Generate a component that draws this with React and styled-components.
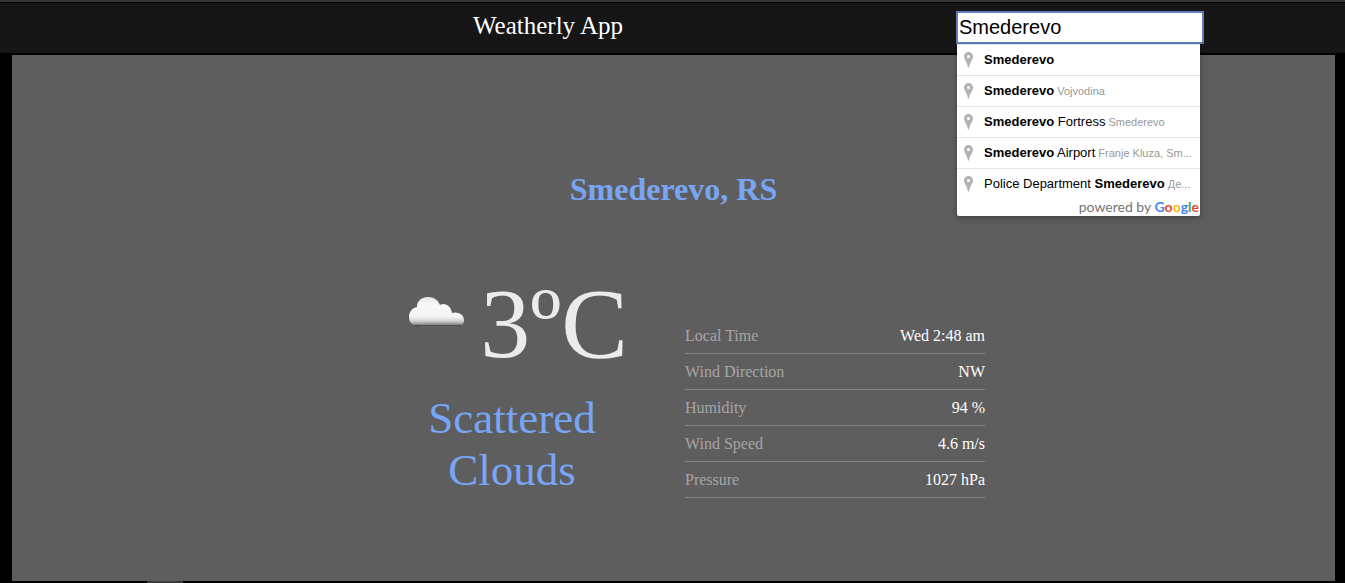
import React, { useState } from "react";
import styled, { createGlobalStyle } from "styled-components";

const GlobalStyle = createGlobalStyle`
  *, *::before, *::after { box-sizing: border-box; }
  body {
    margin: 0;
    background: #000;
    font-family: "Liberation Serif", "Times New Roman", serif;
  }
`;

const Page = styled.div`
  display: flex;
  flex-direction: column;
  min-height: 100vh;
  border-top: 2px solid #363636;
`;

const Header = styled.header`
  display: flex;
  align-items: flex-start;
  padding: 8px 141px 9px 140px;
  border-top: 1px solid #000;
  border-bottom: 2px solid #000;
  background: #161616;
`;

const Title = styled.h1`
  flex: 1;
  margin: 0;
  color: #fff;
  font-size: 25px;
  font-weight: 400;
  line-height: 30px;
  text-align: center;
`;

const Search = styled.div`
  position: relative;
  width: 248px;
`;

const SearchInput = styled.input`
  display: block;
  width: 100%;
  height: 33px;
  padding: 0 1px;
  border: 2px solid #5f7fc0;
  border-radius: 1px;
  outline: none;
  background: #fff;
  color: #000;
  font-family: "Liberation Sans", Arial, sans-serif;
  font-size: 20px;
`;

const Suggestions = styled.div`
  position: absolute;
  top: 100%;
  left: 1px;
  z-index: 1;
  width: 243px;
  overflow: hidden;
  border-top: 1px solid #d9dfec;
  border-radius: 0 0 2px 2px;
  background: #fff;
  box-shadow: 0 2px 6px rgba(0, 0, 0, 0.3);
  font-family: "Liberation Sans", Arial, sans-serif;
`;

const SuggestionList = styled.ul`
  margin: 0;
  padding: 0;
  list-style: none;
`;

const Suggestion = styled.li`
  & + & {
    border-top: 1px solid #e6e6e6;
  }
`;

const SuggestionButton = styled.button`
  display: flex;
  align-items: center;
  gap: 11px;
  width: 100%;
  height: 30px;
  padding: 0 4px 0 7px;
  border: 0;
  background: none;
  color: #000;
  font-family: inherit;
  font-size: 13px;
  text-align: left;
  white-space: nowrap;
  cursor: default;
`;

const Place = styled.span`
  padding-bottom: 2px;
  white-space: pre;
`;

const Region = styled.span`
  color: #999;
  font-size: 11px;
`;

const Attribution = styled.div`
  padding-right: 1px;
  color: #757575;
  font-family: Lato, sans-serif;
  font-size: 14px;
  line-height: 16px;
  padding-bottom: 1px;
  text-align: right;
`;

const LogoLetter = styled.span`
  color: ${(p) => p.$color};
  font-weight: 700;
`;

const Main = styled.main`
  flex: 1;
  margin: 0 10px 0 12px;
  padding: 116px 0 83px;
  background: #5e5e5e;
`;

const City = styled.h2`
  margin: 0 0 67px;
  color: #78a5f5;
  font-size: 32px;
  line-height: 36px;
  text-align: center;
`;

const Weather = styled.div`
  display: flex;
  flex-wrap: wrap;
  justify-content: center;
  align-items: flex-end;
  gap: 23px;
`;

const Conditions = styled.section`
  width: 300px;
  padding-bottom: 2px;
`;

const Temperature = styled.div`
  display: flex;
  justify-content: center;
  align-items: flex-start;
  margin-bottom: 18px;
  color: #ebebeb;
  font-size: 100px;
  line-height: 100px;
`;

const Summary = styled.p`
  margin: 0 auto;
  width: 200px;
  color: #78a5f5;
  font-size: 45px;
  line-height: 52px;
  text-align: center;
`;

const Details = styled.table`
  width: 300px;
  border-collapse: separate;
  border-spacing: 0;
  font-size: 16px;
  line-height: 19px;
`;

const Label = styled.th`
  height: 36px;
  padding: 0;
  border-bottom: 1px solid #858585;
  color: #a6a6a6;
  font-weight: 400;
  text-align: left;
`;

const Value = styled.td`
  padding: 0;
  border-bottom: 1px solid #858585;
  color: #fff;
  text-align: right;
`;

const BottomEdge = styled.footer`
  height: 2px;
  padding-left: 147px;
`;

const BottomTab = styled.div`
  width: 36px;
  height: 2px;
  background: #3a393b;
`;

const places = [
  { match: "Smederevo" },
  { match: "Smederevo", region: "Vojvodina" },
  { match: "Smederevo", after: " Fortress", region: "Smederevo" },
  { match: "Smederevo", after: " Airport", region: "Franje Kluza, Sm..." },
  { before: "Police Department ", match: "Smederevo", region: "Де..." },
];

const details = [
  ["Local Time", "Wed 2:48 am"],
  ["Wind Direction", "NW"],
  ["Humidity", "94 %"],
  ["Wind Speed", "4.6 m/s"],
  ["Pressure", "1027 hPa"],
];

const logo = [
  ["G", "#4285f4"],
  ["o", "#ea4335"],
  ["o", "#fbbc05"],
  ["g", "#4285f4"],
  ["l", "#34a853"],
  ["e", "#ea4335"],
];

function PinIcon() {
  return (
    <svg width="9" height="16" viewBox="0 0 9 16" aria-hidden="true">
      <path
        fill="#b3b3b3"
        fillRule="evenodd"
        d="M4.5 0A4.5 4.5 0 0 0 0 4.5C0 7.6 3 9.6 3.8 15Q4.5 16.4 5.2 15C6 9.6 9 7.6 9 4.5A4.5 4.5 0 0 0 4.5 0ZM4.5 3A1.5 1.5 0 1 1 4.5 6A1.5 1.5 0 1 1 4.5 3Z"
      />
    </svg>
  );
}

function CloudIcon() {
  return (
    <svg width="84" height="74" viewBox="-2 -1 84 74" role="img" aria-label="Cloudy">
      <defs>
        <linearGradient id="cloudFill" x1="0" y1="0" x2="0" y2="1">
          <stop offset="0" stopColor="#e6e6e6" />
          <stop offset="0.3" stopColor="#f8f8f8" />
          <stop offset="0.7" stopColor="#f4f4f4" />
          <stop offset="0.86" stopColor="#d2d2d2" />
          <stop offset="1" stopColor="#808080" />
        </linearGradient>
        <filter id="cloudSoft" x="-10%" y="-10%" width="120%" height="120%">
          <feGaussianBlur stdDeviation="0.7" />
        </filter>
      </defs>
      <path
        fill="#505050"
        filter="url(#cloudSoft)"
        d="M17 48H62Q65 48 63 51Q61 53 58 51H23Q20 53 17 51Z"
      />
      <path
        fill="url(#cloudFill)"
        filter="url(#cloudSoft)"
        d="M16 50C13 49 11 46 11 42C11 37 14 33 19 32C18.500 26 24 22 30 22C36 22 40 25 42 30C47 27 53 31 54 38C59 36 66 39 66 45C66 48 65 50 62 50Z"
      />
    </svg>
  );
}

export default function App() {
  const [query, setQuery] = useState("Smederevo");

  return (
    <>
      <GlobalStyle />
      <Page>
        <Header>
          <Title>Weatherly App</Title>
          <Search>
            <SearchInput
              type="text"
              aria-label="Search for a city"
              value={query}
              onChange={(e) => setQuery(e.target.value)}
            />
            <Suggestions>
              <SuggestionList>
                {places.map((place, i) => (
                  <Suggestion key={i}>
                    <SuggestionButton type="button">
                      <PinIcon />
                      <Place>
                        {place.before}
                        <b>{place.match}</b>
                        {place.after}
                        {place.region && <Region> {place.region}</Region>}
                      </Place>
                    </SuggestionButton>
                  </Suggestion>
                ))}
              </SuggestionList>
              <Attribution>
                powered by{" "}
                {logo.map(([letter, color], i) => (
                  <LogoLetter key={i} $color={color}>
                    {letter}
                  </LogoLetter>
                ))}
              </Attribution>
            </Suggestions>
          </Search>
        </Header>
        <Main>
          <City>Smederevo, RS</City>
          <Weather>
            <Conditions>
              <Temperature>
                <CloudIcon />
                <span>3ºC</span>
              </Temperature>
              <Summary>Scattered Clouds</Summary>
            </Conditions>
            <Details>
              <tbody>
                {details.map(([label, value]) => (
                  <tr key={label}>
                    <Label scope="row">{label}</Label>
                    <Value>{value}</Value>
                  </tr>
                ))}
              </tbody>
            </Details>
          </Weather>
        </Main>
        <BottomEdge>
          <BottomTab />
        </BottomEdge>
      </Page>
    </>
  );
}
